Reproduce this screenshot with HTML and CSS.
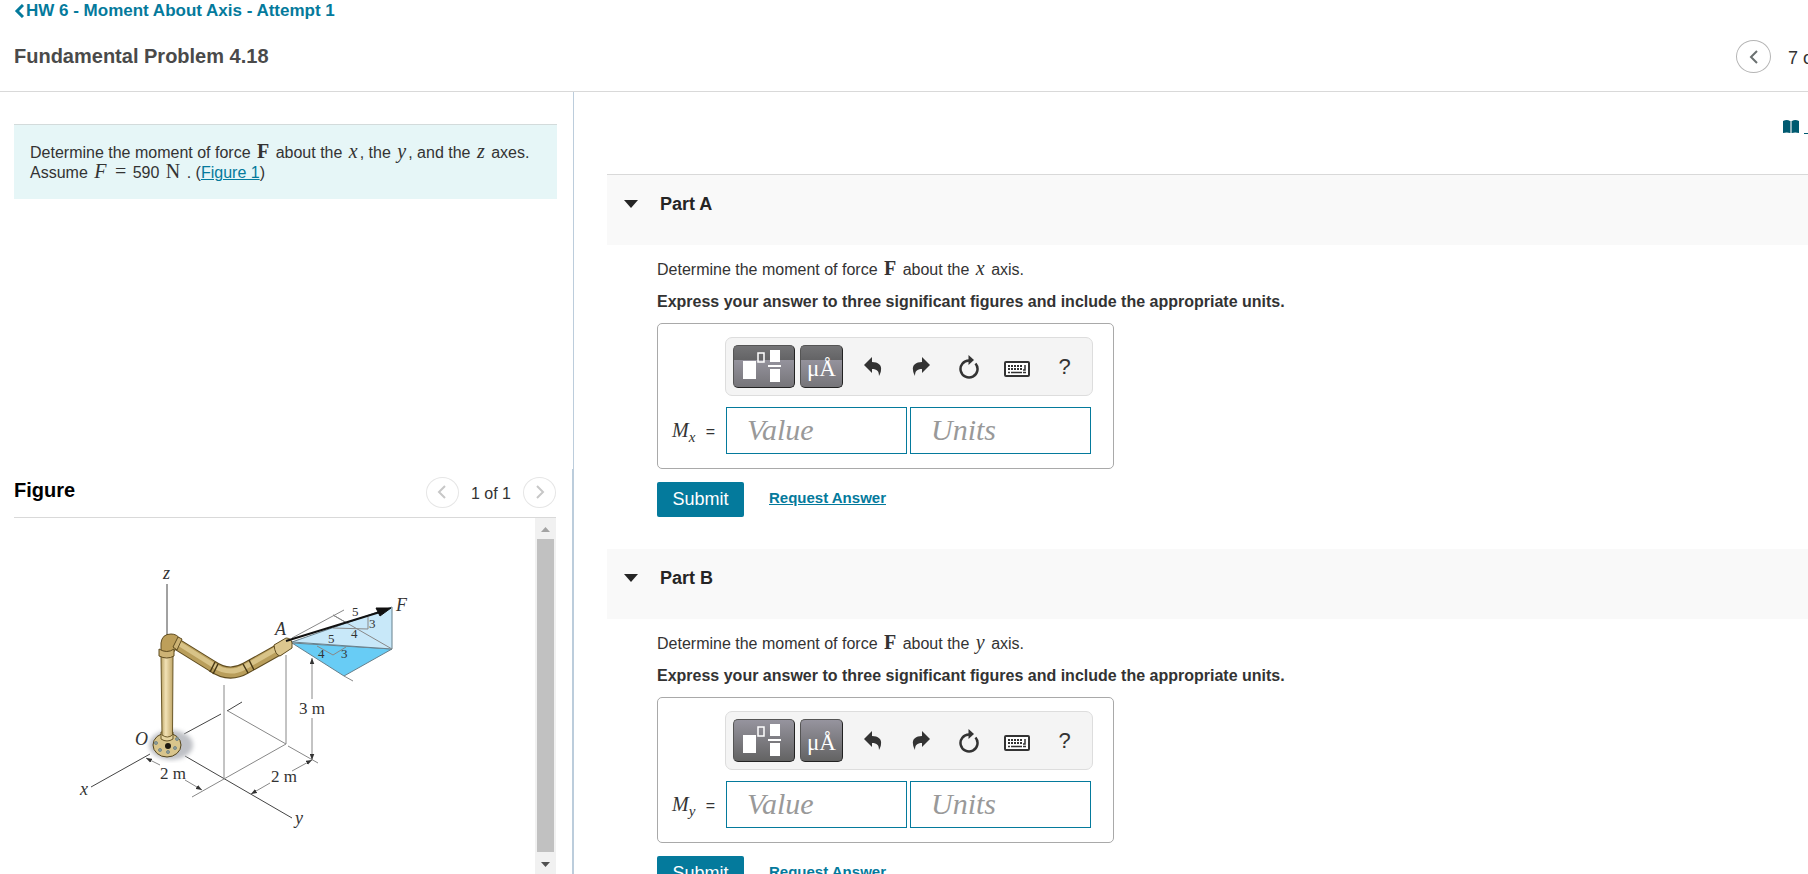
FILE: index.html
```html
<!DOCTYPE html>
<html lang="en">
<head>
    <meta charset="UTF-8">
    <meta name="viewport" content="width=device-width, initial-scale=1.0">
    <title>Fundamental Problem 4.18</title>
    <link rel="stylesheet" href="styles.css">
</head>
<body>
    <svg class="sprite" aria-hidden="true">
        <symbol id="chevron-left" viewBox="0 0 10 16">
            <path d="M8 2 2 8l6 6" fill="none" stroke="currentColor" stroke-width="2"/>
        </symbol>
        <symbol id="chevron-right" viewBox="0 0 10 16">
            <path d="m2 2 6 6-6 6" fill="none" stroke="currentColor" stroke-width="2"/>
        </symbol>
        <symbol id="caret" viewBox="0 0 14 8">
            <path d="M0 0h14L7 8z" fill="currentColor"/>
        </symbol>
        <symbol id="templates" viewBox="0 0 60 41">
            <path d="M9 15h13v18H9zM36 4h10v12H36zM36 23h10v13H36z" fill="#fff"/>
            <path d="M34 20h13" stroke="#fff" stroke-width="2"/>
            <path d="M24 7h6v9h-6z" fill="none" stroke="#fff" stroke-width="1.500"/>
        </symbol>
        <symbol id="undo" viewBox="0 0 18 20">
            <path d="M0 8 8 0v5c6 0 10 3 9 8 0 2-1 4-2 6 0-5-2-7-7-7v4z" fill="currentColor"/>
        </symbol>
        <symbol id="redo" viewBox="0 0 18 20">
            <path d="M18 8 10 0v5C4 5 0 8 1 13c0 2 1 4 2 6 0-5 2-7 7-7v4z" fill="currentColor"/>
        </symbol>
        <symbol id="reset" viewBox="0 0 22 24">
            <path d="M11 5.500A8.500 8.500 0 1 0 17.500 8.500" fill="none" stroke="currentColor" stroke-width="2.500"/>
            <path d="M10.500 0v10l5.500-5z" fill="currentColor"/>
        </symbol>
        <symbol id="keyboard" viewBox="0 0 26 16">
            <rect x="1" y="1" width="24" height="14" rx="1" fill="#fff" stroke="currentColor" stroke-width="2"/>
            <path d="M4 5h15M4 8h14" stroke="currentColor" stroke-width="2" stroke-dasharray="2 1"/>
            <path d="M4 11.500h2m1 0h11m1 0h3M21 4v5h-2" fill="none" stroke="currentColor" stroke-width="1.500"/>
        </symbol>
    </svg>

    <header class="header">
        <a class="back-link" href="#"><svg class="back-icon" viewBox="0 0 10 14"><path d="M9 1 3 7l6 6" fill="none" stroke="currentColor" stroke-width="3"/></svg>HW 6 - Moment About Axis - Attempt 1</a>
        <div class="header-row">
            <h1>Fundamental Problem 4.18</h1>
            <div class="item-nav">
                <button class="round" type="button" aria-label="Previous item"><svg><use href="#chevron-left"/></svg></button>
                <span>7 of 9</span>
            </div>
        </div>
    </header>

    <main class="content">
        <div class="left">
            <section class="problem">
                <div class="intro">
                    Determine the moment of force <b class="math">F</b> about the <i class="math">x</i>, the <i class="math">y</i>, and the <i class="math">z</i> axes.<br>
                    Assume <i class="math">F</i> <span class="math">=</span> 590 <span class="math">N</span> . (<a href="#figure">Figure 1</a>)
                </div>
            </section>

            <section class="figure" id="figure">
                <div class="figure-head">
                    <h2>Figure</h2>
                    <div class="figure-nav">
                        <button class="round" type="button" aria-label="Previous figure" disabled><svg><use href="#chevron-left"/></svg></button>
                        <span>1 of 1</span>
                        <button class="round" type="button" aria-label="Next figure" disabled><svg><use href="#chevron-right"/></svg></button>
                    </div>
                </div>
                <div class="figure-body">
                    <svg class="diagram" viewBox="14 518 440 356">
                        <defs>
                            <marker id="tip" viewBox="0 0 8 6" refX="8" refY="3" markerWidth="6" markerHeight="5" orient="auto-start-reverse" markerUnits="userSpaceOnUse">
                                <path d="M0 0 8 3 0 6z" fill="#333"/>
                            </marker>
                            <linearGradient id="pipe">
                                <stop offset="0" stop-color="#b9a263"/>
                                <stop offset=".4" stop-color="#f2e2b6"/>
                                <stop offset="1" stop-color="#bfa566"/>
                            </linearGradient>
                            <filter id="soft"><feGaussianBlur stdDeviation="2"/></filter>
                        </defs>
                        <!-- axes and ground plane -->
                        <g class="axis">
                            <path d="M167 584v52M150 754 91 787M184 734l37-20M227 711l15-9M185 756l107 62"/>
                        </g>
                        <g class="thin">
                            <path d="M224 685v93M228 711l58 33-94 53M286 655v89M288 746l30 17"/>
                            <path d="M292 638l52-28M333 615l59 34M344 676l9 5"/>
                            <path d="M160 765l-14-7" marker-end="url(#tip)"/>
                            <path d="m185 780 17 10" marker-end="url(#tip)"/>
                            <path d="m270 783-19 11" marker-end="url(#tip)"/>
                            <path d="m292 771 20-11" marker-end="url(#tip)"/>
                            <path d="M312 699v-41" marker-end="url(#tip)"/>
                            <path d="M312 718v42" marker-end="url(#tip)"/>
                        </g>
                        <!-- force components -->
                        <path d="M292 643l100 6-48 27z" fill="#68ccf5" stroke="#67808c"/>
                        <path d="M292 642l100-35v42z" fill="#c8e8f9" stroke="#67808c"/>
                        <path class="thin" d="M333 615l59 34M333 628l35 1v-12M317 646l16 9 13-8"/>
                        <!-- flange -->
                        <ellipse cx="171" cy="745" rx="22" ry="15" fill="#bfc1c6" filter="url(#soft)"/>
                        <ellipse cx="167" cy="745" rx="14" ry="12" fill="#d9c58c" stroke="#54451f"/>
                        <path d="M161 732h12v7q-6 4-12 0z" fill="#e6d5a2" stroke="#6b5828"/>
                        <g fill="#8f9f9b" stroke="#788">
                            <circle cx="156" cy="743" r="1.500"/>
                            <circle cx="160" cy="750" r="1.500"/>
                            <circle cx="168" cy="752" r="1.500"/>
                            <circle cx="175" cy="748" r="1.500"/>
                            <circle cx="177" cy="739" r="1.500"/>
                        </g>
                        <circle cx="168" cy="746" r="3" fill="#1f1a10"/>
                        <!-- pipe -->
                        <path d="M161 656h12l-.5 79q-5 4-10.500 0z" fill="url(#pipe)" stroke="#6b5828"/>
                        <path d="M175 643l37 23q17 12 34 2l34-19" fill="none" stroke="#5f4c20" stroke-width="12"/>
                        <path d="M175 643l37 23q17 12 34 2l34-19" fill="none" stroke="#b99e5b" stroke-width="10"/>
                        <path d="M178 643l35 22q16 11 32 2l33-19" fill="none" stroke="#d8c388" stroke-width="5"/>
                        <path d="M161 652v-9q1-9 10-9 6 0 9 5l-5 11-2 3z" fill="#bd9f5a" stroke="#5f4c20"/>
                        <path d="M159 649q8 5 15 0v7q-7 4-15 0zM173 647l5-10 4 2-5 11z" fill="#cdb375" stroke="#5f4c20"/>
                        <path d="m210 672 5-10m-2 12 5-10M243 664l5 9m1-13 5 10" fill="none" stroke="#493a17" stroke-width="1.500"/>
                        <path d="m274 645 12-7q5 0 6 5v5l-12 8q-5-1-6-11z" fill="#dcc78f" stroke="#5f4c20"/>
                        <!-- force vector -->
                        <path d="m286 641 94-29" stroke="#111" stroke-width="2"/>
                        <path d="m391 608-11 8-4-8z" fill="#111" stroke="#111"/>
                        <g class="label">
                            <text x="163" y="579">z</text>
                            <text x="275" y="635">A</text>
                            <text x="135" y="745">O</text>
                            <text x="80" y="795">x</text>
                            <text x="295" y="824">y</text>
                            <text x="396" y="611">F</text>
                        </g>
                        <g class="size">
                            <text x="160" y="779">2 m</text>
                            <text x="271" y="782">2 m</text>
                            <text x="299" y="714">3 m</text>
                        </g>
                        <g class="ratio">
                            <text x="352" y="616">5</text>
                            <text x="369" y="628">3</text>
                            <text x="351" y="638">4</text>
                            <text x="328" y="643">5</text>
                            <text x="318" y="658">4</text>
                            <text x="341" y="658">3</text>
                        </g>
                    </svg>
                    <div class="scrollbar">
                        <svg class="up" viewBox="0 0 9 5"><path d="M0 5 4.500 0 9 5z" fill="#a3a3a3"/></svg>
                        <div class="thumb"></div>
                        <svg class="down" viewBox="0 0 9 5"><path d="M0 0l4.500 5L9 0z" fill="#505050"/></svg>
                    </div>
                </div>
            </section>
        </div>

        <div class="right">
            <div class="resources">
                <svg class="book" viewBox="0 0 16 13"><path d="M0 1q4-2 7 0v12q-3-1-7 0zM9 1q3-2 7 0v12q-4-1-7 0z" fill="currentColor"/><path d="M8 1v12" stroke="#8fb3bd" stroke-width="2"/></svg>
                <a href="#">&nbsp;Review</a>
            </div>

            <section class="part first">
                <h2 class="part-head"><svg class="caret"><use href="#caret"/></svg>Part A</h2>
                <form class="part-body">
                    <p>Determine the moment of force <b class="math">F</b> about the <i class="math">x</i> axis.</p>
                    <p class="hint">Express your answer to three significant figures and include the appropriate units.</p>
                    <div class="answer">
                        <div class="toolbar">
                            <button class="dark split" type="button" aria-label="Templates"><svg><use href="#templates"/></svg></button>
                            <button class="dark units split" type="button">μÅ</button>
                            <button class="tool" type="button" aria-label="Undo"><svg class="arrow"><use href="#undo"/></svg></button>
                            <button class="tool" type="button" aria-label="Redo"><svg class="arrow"><use href="#redo"/></svg></button>
                            <button class="tool" type="button" aria-label="Reset"><svg class="reset"><use href="#reset"/></svg></button>
                            <button class="tool" type="button" aria-label="Keyboard"><svg class="keyboard"><use href="#keyboard"/></svg></button>
                            <button class="tool" type="button">?</button>
                        </div>
                        <div class="fields">
                            <label for="mx"><i>M<sub>x</sub></i> =</label>
                            <input type="text" id="mx" placeholder="Value">
                            <input type="text" id="mx-units" placeholder="Units" aria-label="Units">
                        </div>
                    </div>
                    <div class="actions">
                        <button class="submit" type="submit">Submit</button>
                        <a href="#">Request Answer</a>
                    </div>
                </form>
            </section>

            <section class="part">
                <h2 class="part-head"><svg class="caret"><use href="#caret"/></svg>Part B</h2>
                <form class="part-body">
                    <p>Determine the moment of force <b class="math">F</b> about the <i class="math">y</i> axis.</p>
                    <p class="hint">Express your answer to three significant figures and include the appropriate units.</p>
                    <div class="answer">
                        <div class="toolbar">
                            <button class="dark" type="button" aria-label="Templates"><svg><use href="#templates"/></svg></button>
                            <button class="dark units" type="button">μÅ</button>
                            <button class="tool" type="button" aria-label="Undo"><svg class="arrow"><use href="#undo"/></svg></button>
                            <button class="tool" type="button" aria-label="Redo"><svg class="arrow"><use href="#redo"/></svg></button>
                            <button class="tool" type="button" aria-label="Reset"><svg class="reset"><use href="#reset"/></svg></button>
                            <button class="tool" type="button" aria-label="Keyboard"><svg class="keyboard"><use href="#keyboard"/></svg></button>
                            <button class="tool" type="button">?</button>
                        </div>
                        <div class="fields">
                            <label for="my"><i>M<sub>y</sub></i> =</label>
                            <input type="text" id="my" placeholder="Value">
                            <input type="text" id="my-units" placeholder="Units" aria-label="Units">
                        </div>
                    </div>
                    <div class="actions">
                        <button class="submit" type="submit">Submit</button>
                        <a href="#">Request Answer</a>
                    </div>
                </form>
            </section>
        </div>
    </main>
</body>
</html>
```
FILE: styles.css
```css
* {
    box-sizing: border-box;
}
body {
    display: flex;
    flex-direction: column;
    height: 100vh;
    margin: 0;
    overflow: hidden;
    font-family: "Liberation Sans", Arial, sans-serif;
    font-size: 16px;
    line-height: 20px;
    color: #333;
    background-color: #fff;
}
h1, h2, p {
    margin: 0;
}
a {
    color: #047a9c;
}
button {
    font-family: inherit;
    padding: 0;
    cursor: pointer;
}
.sprite {
    display: none;
}
.math {
    margin: 0 2px;
    font-family: "Liberation Serif", serif;
    font-size: 20px;
    line-height: 16px;
}

.header {
    height: 92px;
    padding-left: 14px;
    border-bottom: 1px solid #d9d9d9;
    white-space: nowrap;
}
.back-link {
    display: flex;
    align-items: center;
    height: 22px;
    font-size: 17px;
    font-weight: bold;
    text-decoration: none;
}
.back-icon {
    width: 10px;
    height: 14px;
    margin-right: 2px;
}
.header-row {
    display: flex;
    justify-content: space-between;
    align-items: center;
    height: 69px;
}
.header h1 {
    padding-bottom: 2px;
    font-size: 20px;
    color: #4a4a4a;
}
.item-nav {
    display: flex;
    align-items: center;
    gap: 17px;
    width: 72px;
    font-size: 18px;
}
.item-nav span {
    padding-top: 3px;
}
.round {
    display: flex;
    align-items: center;
    justify-content: center;
    flex: none;
    width: 35px;
    height: 33px;
    border: 1px solid #b5b5b5;
    border-radius: 50%;
    background-color: #fff;
    color: #6a7070;
}
.round svg {
    width: 10px;
    height: 16px;
}

.content {
    display: flex;
    flex: 1;
    min-height: 0;
}
.left {
    display: grid;
    grid-template-rows: minmax(0, 377fr) minmax(0, 405fr);
    flex: none;
    width: 574px;
}
.problem {
    padding: 32px 16px 0 14px;
    border-right: 1px solid #bccddc;
}
.intro {
    height: 75px;
    padding: 18px 16px;
    border-top: 1px solid #d3dbdb;
    background-color: #e6f6f7;
}
.figure {
    display: flex;
    flex-direction: column;
    padding: 0 16px 0 14px;
    border-right: 2px solid #bccddc;
}
.figure-head {
    display: flex;
    justify-content: space-between;
    align-items: center;
    flex: none;
    height: 49px;
    border-bottom: 1px solid #d9d9d9;
}
.figure-head h2 {
    padding-bottom: 7px;
    font-size: 20px;
    color: #000;
}
.figure-nav {
    display: flex;
    align-items: center;
    gap: 12px;
    padding-bottom: 2px;
}
.figure-nav span {
    padding-top: 4px;
}
.figure-nav .round {
    width: 33px;
    height: 31px;
    border-color: #e6e6e6;
    color: #c7c7c7;
}
.figure-body {
    display: flex;
    justify-content: space-between;
    flex: 1;
    min-height: 0;
}
.diagram {
    width: 440px;
    height: 356px;
}
.axis, .thin {
    fill: none;
    stroke: #444;
}
.thin {
    stroke: #888;
}
.diagram text {
    font-family: "Liberation Serif", serif;
    fill: #333;
}
.label {
    font-size: 18px;
    font-style: italic;
}
.size {
    font-size: 17px;
}
.ratio {
    font-size: 13px;
}
.scrollbar {
    display: flex;
    flex-direction: column;
    align-items: center;
    justify-content: space-between;
    width: 21px;
    background-color: #f1f1f1;
}
.scrollbar svg {
    width: 9px;
    height: 5px;
    margin: 9px 0 7px;
}
.scrollbar .down {
    margin: 10px 0 7px;
}
.thumb {
    flex: 1;
    width: 17px;
    background-color: #c1c1c1;
}

.right {
    flex: 1;
    min-width: 0;
    padding-left: 33px;
    overflow: hidden;
}
.resources {
    display: flex;
    justify-content: flex-end;
    height: 82px;
    padding-top: 25px;
    white-space: nowrap;
    color: #005a70;
}
.book {
    flex: none;
    width: 16px;
    height: 13px;
    margin: 3px 5px 0 0;
}
.resources a {
    width: 4px;
    overflow: hidden;
    color: #005a70;
}
.part-head {
    display: flex;
    align-items: center;
    gap: 22px;
    height: 70px;
    padding: 0 17px 12px;
    font-size: 18px;
    color: #252525;
    background-color: #f9f9f9;
}
.first .part-head {
    height: 71px;
    border-top: 1px solid #d9d9d9;
}
.caret {
    width: 14px;
    height: 8px;
}
.part-body {
    padding: 14px 0 32px 50px;
}
.part-body p {
    height: 32px;
    line-height: 22px;
}
.part-body .hint {
    font-weight: bold;
}
.answer {
    width: 457px;
    height: 146px;
    padding: 13px 20px 13px 14px;
    border: 1px solid #a9a9a9;
    border-radius: 5px;
}
.toolbar {
    display: flex;
    align-items: center;
    gap: 5px;
    width: 368px;
    height: 59px;
    margin-left: 53px;
    padding-left: 7px;
    border: 1px solid #ddd;
    border-radius: 7px;
    background-color: #f4f4f4;
}
.dark {
    flex: none;
    width: 62px;
    height: 43px;
    border: 1px solid #555;
    border-right-color: #222;
    border-bottom-color: #222;
    border-radius: 5px;
    color: #fff;
    background: linear-gradient(#96949e, #636363);
}
.dark svg {
    display: block;
    width: 60px;
    height: 41px;
}
.units {
    width: 43px;
    padding-top: 5px;
    font-family: "Liberation Serif", serif;
    font-size: 23px;
}
.split {
    background: linear-gradient(#747476, #636365 35%, #94929c 35%, #767579);
}
.tool {
    display: flex;
    align-items: center;
    justify-content: center;
    width: 43px;
    height: 43px;
    border: 0;
    font-size: 22px;
    color: #333;
    background: none;
}
.units + .tool {
    margin-left: 3px;
}
.arrow {
    width: 18px;
    height: 20px;
}
.reset {
    width: 22px;
    height: 24px;
}
.keyboard {
    width: 26px;
    height: 16px;
    margin-top: 4px;
}
.fields {
    display: flex;
    align-items: center;
    gap: 3px;
    margin-top: 11px;
}
.fields label {
    display: flex;
    align-items: baseline;
    justify-content: space-between;
    width: 51px;
    padding-right: 8px;
    white-space: nowrap;
}
.fields label i {
    font-family: "Liberation Serif", serif;
    font-size: 20px;
}
.fields sub {
    font-size: 15px;
    line-height: 0;
}
.fields input {
    width: 181px;
    height: 47px;
    padding: 0 20px 2px;
    border: 1px solid #047a9c;
    border-radius: 0;
    font-family: "Liberation Serif", serif;
    font-size: 30px;
}
.fields input::placeholder {
    font-style: italic;
    color: #999;
}
.actions {
    display: flex;
    align-items: center;
    gap: 25px;
    margin-top: 13px;
    font-size: 15px;
    font-weight: bold;
}
.actions a {
    padding-bottom: 3px;
}
.submit {
    width: 87px;
    height: 35px;
    border: 0;
    border-radius: 2px;
    font-size: 18px;
    color: #fff;
    background-color: #047a9c;
}
```
